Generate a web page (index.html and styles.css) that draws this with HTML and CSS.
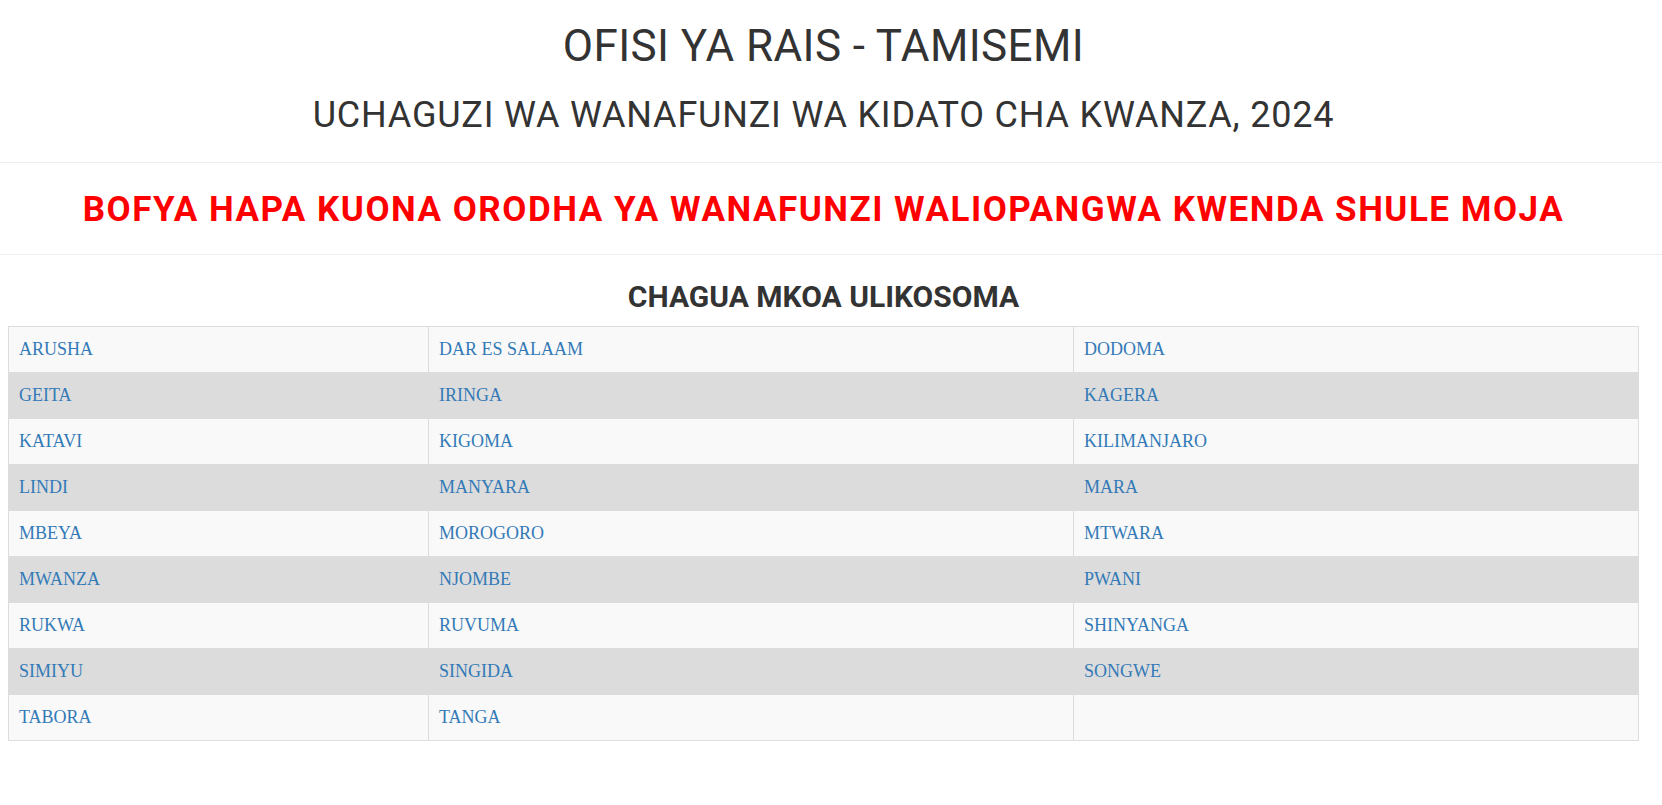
FILE: index.html
```html
<!DOCTYPE html>
<html lang="sw">
<head>
<meta charset="utf-8">
<title>OFISI YA RAIS - TAMISEMI</title>
<link rel="stylesheet" href="styles.css">
</head>
<body>
<header class="head">
  <h1 class="title">OFISI YA RAIS - TAMISEMI</h1>
  <h2 class="subtitle">UCHAGUZI WA WANAFUNZI WA KIDATO CHA KWANZA, 2024</h2>
</header>
<hr class="rule">
<h2 class="notice"><a href="#">BOFYA HAPA KUONA ORODHA YA WANAFUNZI WALIOPANGWA KWENDA SHULE MOJA</a></h2>
<hr class="rule">
<h3 class="pick">CHAGUA MKOA ULIKOSOMA</h3>
<table class="regions">
  <colgroup><col class="c1"><col class="c2"><col class="c3"></colgroup>
  <tbody>
    <tr><td><a href="#">ARUSHA</a></td><td><a href="#">DAR ES SALAAM</a></td><td><a href="#">DODOMA</a></td></tr>
    <tr><td><a href="#">GEITA</a></td><td><a href="#">IRINGA</a></td><td><a href="#">KAGERA</a></td></tr>
    <tr><td><a href="#">KATAVI</a></td><td><a href="#">KIGOMA</a></td><td><a href="#">KILIMANJARO</a></td></tr>
    <tr><td><a href="#">LINDI</a></td><td><a href="#">MANYARA</a></td><td><a href="#">MARA</a></td></tr>
    <tr><td><a href="#">MBEYA</a></td><td><a href="#">MOROGORO</a></td><td><a href="#">MTWARA</a></td></tr>
    <tr><td><a href="#">MWANZA</a></td><td><a href="#">NJOMBE</a></td><td><a href="#">PWANI</a></td></tr>
    <tr><td><a href="#">RUKWA</a></td><td><a href="#">RUVUMA</a></td><td><a href="#">SHINYANGA</a></td></tr>
    <tr><td><a href="#">SIMIYU</a></td><td><a href="#">SINGIDA</a></td><td><a href="#">SONGWE</a></td></tr>
    <tr><td><a href="#">TABORA</a></td><td><a href="#">TANGA</a></td><td></td></tr>
  </tbody>
</table>
</body>
</html>
```

FILE: styles.css
```css
* { box-sizing: border-box; }
html, body { margin: 0; padding: 0; background: #fff; }
body {
  font-family: Roboto, "Liberation Sans", sans-serif;
  color: #333;
}
.head { padding-top: 16px; padding-right: 15px; }
.title {
  margin: 0;
  font-size: 44px;
  font-weight: 400;
  line-height: 60px;
  letter-spacing: 0.4px;
  text-align: center;
}
.subtitle {
  margin: 14px 0 0;
  font-size: 36px;
  font-weight: 400;
  line-height: 50px;
  letter-spacing: 0.8px;
  text-align: center;
}
.rule {
  margin: 22px 0 0;
  border: 0;
  border-top: 1px solid #eee;
  height: 0;
}
.notice {
  margin: 22px 0 19px;
  padding-right: 15px;
  font-size: 35px;
  font-weight: 700;
  line-height: 50px;
  letter-spacing: 1.5px;
  text-align: center;
}
.notice a { color: #ff0000; text-decoration: none; }
.notice + .rule { margin-top: 0; }
.pick {
  margin: 22px 0 9px;
  padding-right: 15px;
  font-size: 30px;
  font-weight: 700;
  line-height: 40px;
  text-align: center;
}
.regions {
  margin-left: 8px;
  width: 1630px;
  table-layout: fixed;
  border-collapse: collapse;
  border: 1px solid #ddd;
  font-family: "Liberation Serif", serif;
  font-size: 18px;
}
.c1 { width: 420px; }
.c2 { width: 645px; }
.c3 { width: 565px; }
.regions tr { height: 46px; }
.regions tr:nth-child(odd) { background: #f9f9f9; }
.regions tr:nth-child(even) { background: #dcdcdc; }
.regions td {
  padding: 0 10px;
  border: 1px solid #ddd;
  vertical-align: middle;
}
.regions tr:nth-child(even) td { border-color: #dcdcdc; }
.regions a { color: #337ab7; text-decoration: none; }
```
